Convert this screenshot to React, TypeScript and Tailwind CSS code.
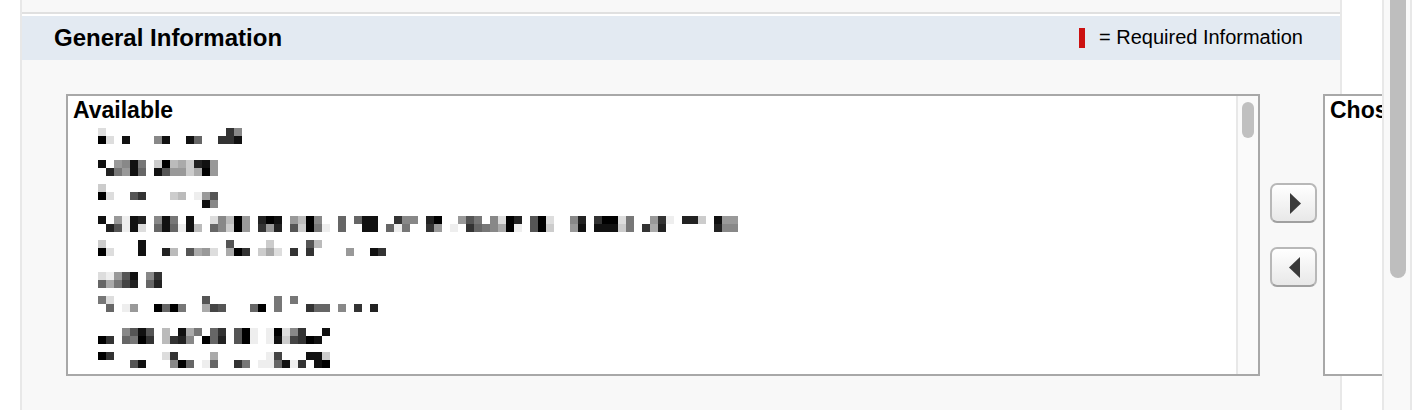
// blurred list entries, one string per 8px line, each hex digit is the grey of an 8px block
const BLUR: [number, string][] = [
  [128, "dfffffffffffffff38"],
  [136, "0df1fff81ff16ff331"],
  [160, "1f9817fc0bac219"],
  [168, "f27916f1599ca09"],
  [184, "c"],
  [192, "0dff53fffcbfe95"],
  [200, "fffffffffffff18"],
  [216, "1f9e12f817f1ffd8b09f201f9b08ff6f611ff388f20ff957f8d02f50dff82f300d7ff93ef22cf199"],
  [224, "f25e1df616e1bf68c09f392f5c07ef6ff11f6e7ff39fef3678a0ef50cff91f111c7f3a2ffffff288"],
  [240, "cffff1ffffffffff5ffffcffff5b"],
  [248, "0dfff1ff2bf5a9dfa03fcadf3f3ffff9ff13"],
  [272, "de951f83"],
  [280, "6a742f62"],
  [296, "7dfffffffffff5ffffffff7f7"],
  [304, "f6fe9ff0607ffa45fff60f7fff366f8f3f2"],
  [328, "fff8515fbf1a7f63f50efe0d83ff1"],
  [336, "03f6703fb328f062f50efe1c4301"],
  [352, "03ffffffd3ffffaffffffe4fff11c"],
  [360, "ffff51fff806fe6ff37fee61e3f10"],
];

function BlurredRows() {
  return (
    <svg width="640" height="240" viewBox="0 128 640 240" shapeRendering="crispEdges" className="mt-[4px] ml-[30px] block shrink-0">
      {BLUR.map(([y, row]) =>
        row.split("").map((c, i) =>
          c === "f" ? null : <rect key={`${y}-${i}`} x={i * 8} y={y} width="8" height="8" fill={`#${c}${c}${c}`} />
        )
      )}
    </svg>
  );
}

function ArrowButton({ dir }: { dir: "right" | "left" }) {
  return (
    <button className="flex h-[40px] w-[47px] items-center justify-center rounded-[7px] border-2 border-[#b8b8b8] border-b-[#a0a0a0] bg-gradient-to-b from-white to-[#e8e8e8]">
      <svg width="11" height="21" viewBox="0 0 11 21" className={dir === "right" ? "ml-[3px]" : "ml-[1px]"}>
        <path d={dir === "right" ? "M0 0 L11 10.5 L0 21 Z" : "M11 0 L0 10.5 L11 21 Z"} fill="#3a3a3a" />
      </svg>
    </button>
  );
}

export default function App() {
  return (
    <div className="flex h-[410px] w-[1418px] overflow-hidden bg-white pl-[20px] font-['Liberation_Sans',Arial,sans-serif] text-black">
      <div className="h-full w-[1362px] shrink-0 overflow-hidden">
        <div className="h-full w-[1322px] border-x-2 border-[#e8e8e8] bg-[#f8f8f8]">
          <div className="h-[14px] border-b-2 border-[#e0e0e0]" />
          <div className="h-[2px] bg-white" />
          <div className="flex h-[44px] items-center justify-between bg-[#e3eaf2] pr-[37px] pl-[32px]">
            <h2 className="text-[24px] leading-none font-bold">General Information</h2>
            <div className="flex items-center">
              <span className="h-[20px] w-[6px] bg-[#cc1111]" />
              <span className="mb-[2px] ml-[14px] text-[20px] leading-none">= Required Information</span>
            </div>
          </div>
          <div className="flex pt-[34px] pl-[44px]">
            <div className="flex h-[282px] w-[1194px] shrink-0 overflow-hidden border-2 border-[#a8a8a8] bg-white">
              <div className="min-w-0 flex-1">
                <div className="h-[28px] pt-[1px] pl-[5px] text-[23px] leading-[26px] font-bold">Available</div>
                <BlurredRows />
              </div>
              <div className="w-[22px] shrink-0 border-l-2 border-[#e8e8e8] bg-[#fafafa] pt-[6px] pl-[4px]">
                <div className="h-[36px] w-[12px] rounded-[6px] bg-[#c0c0c0]" />
              </div>
            </div>
            <div className="ml-[10px] flex w-[47px] shrink-0 flex-col gap-[24px] pt-[89px]">
              <ArrowButton dir="right" />
              <ArrowButton dir="left" />
            </div>
            <div className="ml-[6px] h-[282px] w-[100px] shrink-0 border-2 border-[#a8a8a8] bg-white">
              <div className="h-[28px] pt-[1px] pl-[5px] text-[23px] leading-[26px] font-bold">Chosen</div>
            </div>
          </div>
        </div>
      </div>
      {/* page scrollbar */}
      <div className="h-full w-[30px] shrink-0 border-x-2 border-[#e8e8e8] bg-[#f9f9f9] pl-[6px]">
        <div className="h-[278px] w-[16px] rounded-b-[8px] bg-[#bebebe]" />
      </div>
    </div>
  );
}
